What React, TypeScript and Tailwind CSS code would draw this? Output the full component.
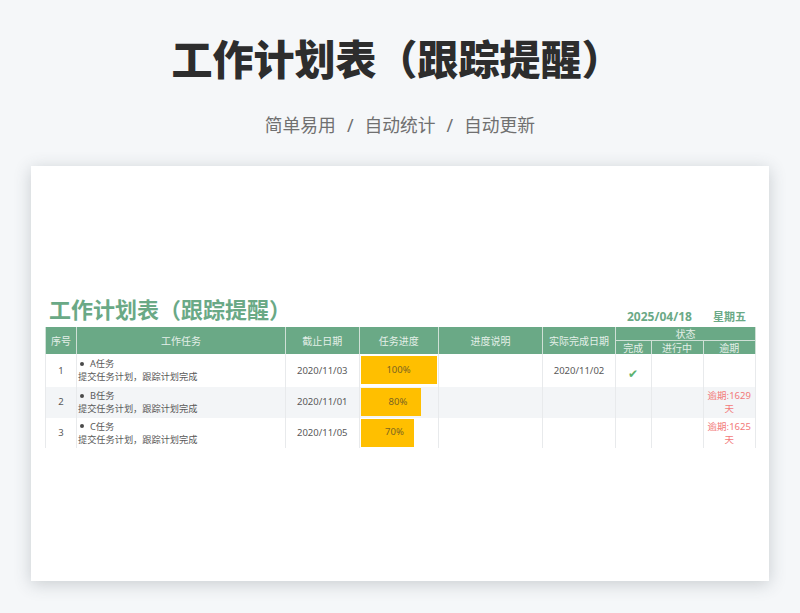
const cjk = "font-['Noto_Sans','Noto_Sans_CJK_SC',sans-serif]";

const rows = [
  { no: 1, name: "A任务", due: "2020/11/03", progress: 100, barW: 76, done: "2020/11/02", check: true, late: "", tail: "", h: "h-[32.5px]", stripe: false },
  { no: 2, name: "B任务", due: "2020/11/01", progress: 80, barW: 60, done: "", check: false, late: "逾期:1629", tail: "天", h: "h-[31px]", stripe: true },
  { no: 3, name: "C任务", due: "2020/11/05", progress: 70, barW: 53, done: "", check: false, late: "逾期:1625", tail: "天", h: "h-[30px]", stripe: false },
];

const th = "border-x border-[#cfe0d6] bg-[#6aa986] p-0 text-center align-middle font-normal text-[10px] leading-none text-[#e4efe8]";
const cell = "border-x border-[#e8eaec] p-0 align-middle";
const td = `${cell} pt-[1px] text-center text-[9.5px] text-[#595959]`;

export default function App() {
  return (
    <div className={`flex h-[613px] w-[800px] flex-col items-center overflow-hidden bg-[#f5f7f9] ${cjk}`}>
      <h1 className="mt-[32px] h-[55px] w-[451px] -translate-x-[3px] text-[41px] font-black leading-[55px] whitespace-nowrap text-[#2d2d2d]">
        工作计划表（跟踪提醒）
      </h1>
      <div className="mt-[25px] flex h-[26px] items-center gap-[9px] text-[17.75px] leading-[26px] text-[#707070]">
        <span>简单易用</span>
        <span className="px-[2px]">/</span>
        <span>自动统计</span>
        <span className="px-[2px]">/</span>
        <span>自动更新</span>
      </div>
      <div className="mt-[28px] h-[415px] w-[738px] bg-white px-[14px] pt-[131px] shadow-[0_3px_16px_rgba(60,70,80,0.24)]">
        <div className="flex h-[30px] items-end">
          <div className="ml-[4px] w-[578px] pb-[3px] text-[22px] font-bold leading-[30px] whitespace-nowrap text-[#6aa986]">
            工作计划表（跟踪提醒）
          </div>
          <div className="w-[86px] pb-[2px] text-[12px] font-bold leading-[16px] text-[#6aa986]">2025/04/18</div>
          <div className="pb-[2px] text-[11px] font-bold leading-[16px] text-[#6aa986]">星期五</div>
        </div>
        <table className="w-[710px] table-fixed border-collapse">
          <colgroup>
            <col className="w-[31px]" />
            <col className="w-[209px]" />
            <col className="w-[73.5px]" />
            <col className="w-[79.5px]" />
            <col className="w-[104px]" />
            <col className="w-[73px]" />
            <col className="w-[35.5px]" />
            <col className="w-[52px]" />
            <col className="w-[52.5px]" />
          </colgroup>
          <thead>
            <tr className="h-[13.5px]">
              <th rowSpan={2} className={th}>序号</th>
              <th rowSpan={2} className={th}>工作任务</th>
              <th rowSpan={2} className={th}>截止日期</th>
              <th rowSpan={2} className={th}>任务进度</th>
              <th rowSpan={2} className={th}>进度说明</th>
              <th rowSpan={2} className={th}>实际完成日期</th>
              <th colSpan={3} className={`${th} border-b`}>状态</th>
            </tr>
            <tr className="h-[13.5px]">
              <th className={th}>完成</th>
              <th className={th}>进行中</th>
              <th className={th}>逾期</th>
            </tr>
          </thead>
          <tbody>
            {rows.map((r) => (
              <tr key={r.no} className={`${r.h} ${r.stripe ? "bg-[#f3f5f7]" : "bg-white"}`}>
                <td className={td}>{r.no}</td>
                <td className={`${cell} pl-[1px] text-left text-[9.2px] leading-[13px] text-[#595959]`}>
                  <div className="flex items-center">
                    <span className="ml-[2px] mr-[6px] size-[4px] rounded-full bg-[#4a4a4a]" />
                    <span>{r.name}</span>
                  </div>
                  <div className="whitespace-nowrap">提交任务计划，跟踪计划完成</div>
                </td>
                <td className={td}>{r.due}</td>
                <td className={`${cell} px-[1px] py-[1px]`}>
                  <div
                    className="flex h-[28px] items-center justify-center bg-[#ffbf00] text-[9.5px] text-[#7a6420]"
                    style={{ width: `${r.barW}px` }}
                  >
                    <span className={r.progress === 100 ? "" : "ml-[15px]"}>{r.progress}%</span>
                  </div>
                </td>
                <td className={td} />
                <td className={td}>{r.done}</td>
                <td className={`${cell} pt-[3px] text-center`}>
                  {r.check && <span className="text-[12px] leading-none text-[#5cb26f]">✔</span>}
                </td>
                <td className={td} />
                <td className={`${cell} text-center text-[9.5px] leading-[13px] whitespace-nowrap text-[#f27a7a]`}>
                  {r.late}
                  {r.tail && <br />}
                  {r.tail}
                </td>
              </tr>
            ))}
          </tbody>
        </table>
      </div>
    </div>
  );
}
